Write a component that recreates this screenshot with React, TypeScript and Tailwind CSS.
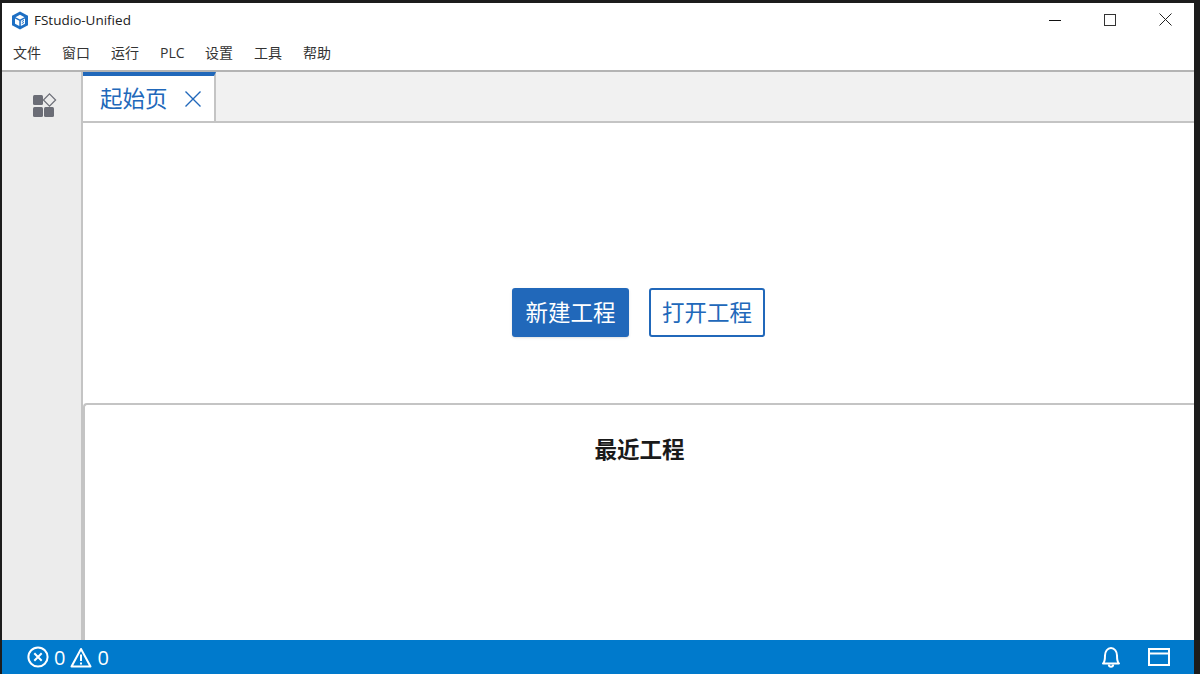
import React from "react";

const cjk = { fontFamily: '"Open Sans","Noto Sans CJK SC",sans-serif' };

function Logo() {
  return (
    <svg width="18" height="19" viewBox="0 0 18 19">
      <path d="M9 0.5 L17 4.8 V14.2 L9 18.5 L1 14.2 V4.8 Z" fill="#1d6fc4" />
      <path d="M4.5 6.2 L9 3.8 L13.5 6.2 L9 8.6 Z" fill="#fff" />
      <path d="M4 7.5 L8.3 9.8 V15 L4 12.7 Z" fill="#fff" />
      <path d="M9.8 9.8 L14 7.5 V12.7 L9.8 15 Z" fill="#fff" />
      <path d="M10.8 10.6 L13 9.4 M10.8 12.6 L13 11.4" stroke="#1d6fc4" strokeWidth="1" />
    </svg>
  );
}

export default function App() {
  const menus = [
    ["文件", "w-[49px]"],
    ["窗口", "w-[49px]"],
    ["运行", "w-[49px]"],
    ["PLC", "w-[45px]"],
    ["设置", "w-[49px]"],
    ["工具", "w-[49px]"],
    ["帮助", "w-[49px]"],
  ];
  return (
    <div className="w-[1200px] h-[674px] overflow-hidden flex flex-col bg-[#1c1c1c] pt-[3px] pl-[2px] pr-[6px]" style={cjk}>
      <div className="h-[33px] shrink-0 bg-white flex items-center">
        <div className="ml-[9px] mr-[5px] flex mt-[1px]"><Logo /></div>
        <span className="text-[13.5px] text-[#222] mt-[1px]">FStudio-Unified</span>
        <div className="ml-auto flex items-center">
          <svg width="12" height="12" viewBox="0 0 12 12" className="mr-[43px]"><path d="M0 6.5H12" stroke="#111" /></svg>
          <svg width="12" height="12" viewBox="0 0 12 12" className="mr-[43px]"><rect x="0.5" y="0.5" width="11" height="11" fill="none" stroke="#333" /></svg>
          <svg width="13" height="13" viewBox="0 0 13 13" className="mr-[22px]"><path d="M0.5 0.5L12.5 12.5M12.5 0.5L0.5 12.5" stroke="#222" /></svg>
        </div>
      </div>
      <div className="h-[36px] shrink-0 bg-white border-b-2 border-[#b4b4b4] flex items-start pl-[11px] pt-[7px]">
        {menus.map(([m, w]) => (
          <span key={m} className={`text-[14px] leading-[20px] text-[#333] ${w}`}>{m}</span>
        ))}
      </div>
      <div className="flex-1 flex min-h-0">
        <div className="w-[81px] shrink-0 bg-[#ececec] flex justify-start pl-[29px] pt-[21px] border-r-2 border-[#c4c4c4]">
          <svg width="26" height="25" viewBox="0 0 26 25">
            <rect x="2" y="2" width="10" height="10" rx="1.5" fill="#6b6d76" />
            <rect x="2" y="14" width="10" height="10" rx="1.5" fill="#6b6d76" />
            <rect x="13" y="14" width="10" height="10" rx="1.5" fill="#6b6d76" />
            <path d="M18.5 0.9L24.6 7L18.5 13.1L12.4 7Z" fill="none" stroke="#6b6d76" strokeWidth="1.2" />
          </svg>
        </div>
        <div className="flex-1 flex flex-col min-w-0 bg-white">
          <div className="h-[51px] shrink-0 bg-[#f1f1f1] border-b-2 border-[#c4c4c4] flex">
            <div className="w-[133px] bg-white border-t-4 border-t-[#2168ba] border-r-2 border-r-[#c4c4c4] flex items-center pl-[17px]">
              <span className="text-[22.5px] text-[#2168ba] leading-none mt-[1px]">起始页</span>
              <svg width="16" height="16" viewBox="0 0 16 16" className="ml-[17px]"><path d="M0.5 0.5L15.5 15.5M15.5 0.5L0.5 15.5" stroke="#2168ba" strokeWidth="1.4" /></svg>
            </div>
          </div>
          <div className="h-[280px] shrink-0 bg-white flex items-start justify-center gap-[20px] pt-[165px]">
            <button className="w-[117px] h-[49px] rounded-[3px] bg-[#2168ba] text-white text-[22.5px] leading-[47px] shadow-sm">新建工程</button>
            <button className="w-[116px] h-[49px] rounded-[3px] bg-white text-[#2168ba] text-[22.5px] leading-[43px] border-2 border-[#2168ba]">打开工程</button>
          </div>
          <div className="flex-1 bg-white border-t-2 border-l-2 border-[#c4c4c4] rounded-tl-[4px] flex justify-center pt-[29px]">
            <span className="text-[22.5px] font-bold text-[#1a1a1a] leading-[32px]">最近工程</span>
          </div>
        </div>
      </div>
      <div className="h-[34px] shrink-0 bg-[#007acc] flex items-center text-white text-[20px] pl-[25px] pr-[24px]">
        <svg width="22" height="22" viewBox="0 0 22 22" fill="none" stroke="#fff" strokeWidth="2"><circle cx="11" cy="11" r="9.6" /><path d="M7.3 7.3L14.7 14.7M14.7 7.3L7.3 14.7" /></svg>
        <span className="ml-[5px] leading-none mt-[1px]">0</span>
        <svg width="22" height="21" viewBox="0 0 22 21" fill="none" stroke="#fff" strokeWidth="2" className="ml-[5px]"><path d="M11 2L20.5 19.5H1.5Z" strokeLinejoin="round" /><path d="M11 7.5V14M11 15.5V17.5" /></svg>
        <span className="ml-[5px] leading-none mt-[1px]">0</span>
        <svg width="20" height="23" viewBox="0 0 20 23" fill="none" stroke="#fff" strokeWidth="2" className="ml-auto"><path d="M2 17.5C4 16 4 13 4 9.5C4 5.5 6.5 2 10 2C13.5 2 16 5.5 16 9.5C16 13 16 16 18 17.5Z" strokeLinejoin="round" /><path d="M7.8 18.5C8 21.5 12 21.5 12.2 18.5" /></svg>
        <svg width="22" height="18" viewBox="0 0 22 18" fill="none" stroke="#fff" strokeWidth="2" className="ml-[27px]"><rect x="1" y="1" width="20" height="16" /><path d="M1 5.5H21" /></svg>
      </div>
    </div>
  );
}
